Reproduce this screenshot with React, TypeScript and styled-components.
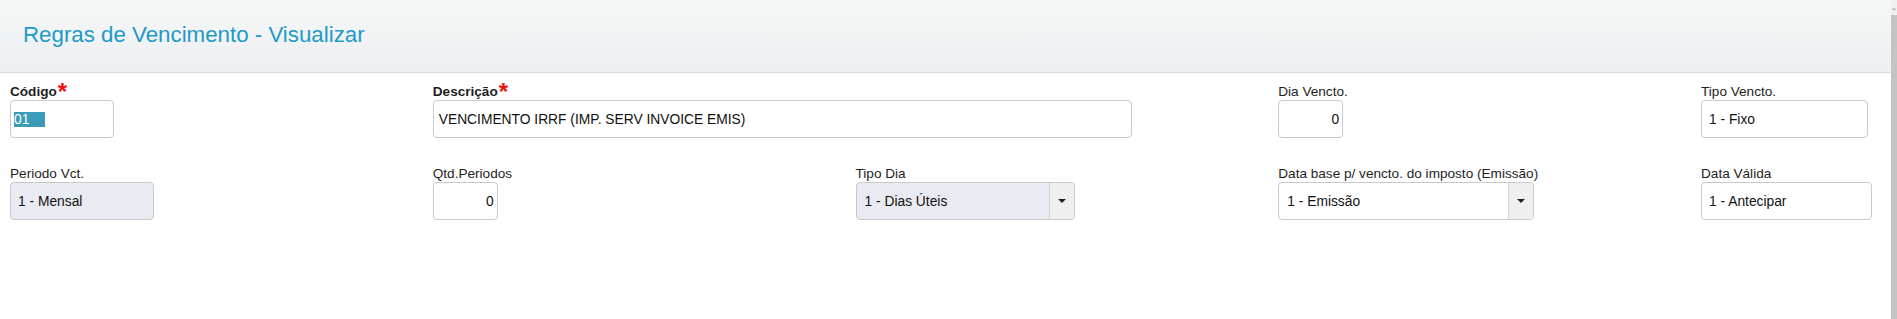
import styled, { createGlobalStyle } from 'styled-components'

const GlobalStyle = createGlobalStyle`
    html, body {
        margin: 0;
        padding: 0;
        background: #fff;
        font-family: "Liberation Sans", Arial, sans-serif;
    }
`

const Page = styled.div`
    display: flex;
    height: 319px;
    overflow: hidden;
`

const Main = styled.div`
    flex-grow: 1;
    display: flex;
    flex-direction: column;
`

const Header = styled.div`
    height: 73px;
    border-bottom: 1px solid #d9dadb;
    background: linear-gradient(#f6f7f7, #eeeff1);
    display: flex;
    align-items: center;
    padding: 0 0 3px 23px;
    box-sizing: border-box;
    flex-shrink: 0;
`

const Title = styled.h1`
    margin: 0;
    font-size: 22.3px;
    font-weight: normal;
    color: #1d9bc7;
`

const Form = styled.div`
    display: grid;
    grid-template-columns: repeat(4, 422.75px) 1fr;
    row-gap: 27px;
    padding: 10px 0 0 10px;
`

const Field = styled.div<{ span?: number }>`
    display: flex;
    flex-direction: column;
    align-items: flex-start;
    ${props => props.span ? `grid-column: span ${props.span};` : ""}
`

const Label = styled.label<{ required?: boolean }>`
    font-size: 13.6px;
    line-height: 17px;
    color: #1e1e1e;
    font-weight: ${props => props.required ? "bold" : "normal"};
    white-space: nowrap;
`

// red mark after mandatory field names
const Star = styled.span`
    color: #f01010;
    font-size: 24px;
    line-height: 0;
    font-weight: bold;
    vertical-align: -4px;
    margin-left: 1px;
`

const Box = styled.div<{ w: number; grey?: boolean; right?: boolean; pad?: number }>`
    width: ${props => props.w}px;
    height: 38px;
    box-sizing: border-box;
    border: 1px solid #c9c9c9;
    border-radius: 4px;
    background: ${props => props.grey ? "#e8ebf1" : "#fff"};
    display: flex;
    align-items: center;
    overflow: hidden;
    justify-content: ${props => props.right ? "flex-end" : "flex-start"};
    padding: ${props => props.right ? "0 3px 0 0" : `0 0 0 ${props.pad ?? 7}px`};
    font-size: 13.8px;
    color: #111;
    white-space: nowrap;
`

const Value = styled.span`
    flex-grow: 1;
`

const Selected = styled.span`
    background: #3a9cb9;
    color: #fff;
    width: 31px;
    line-height: 15px;
`

const Arrow = styled.div`
    width: 24px;
    align-self: stretch;
    border-left: 1px solid #d2d2d2;
    background: #efefef;
    display: flex;
    align-items: center;
    justify-content: center;

    &::after {
        content: "";
        border-left: 4px solid transparent;
        border-right: 4px solid transparent;
        border-top: 4px solid #222;
    }
`

const Scrollbar = styled.div`
    width: 6px;
    flex-shrink: 0;
    background: #f0f0f0;
    display: flex;
    flex-direction: column;
    align-items: center;
`

const ScrollArrow = styled.div`
    margin-top: 8px;
    border-left: 2px solid transparent;
    border-right: 2px solid transparent;
    border-bottom: 2px solid #a3a3a3;
`

const Thumb = styled.div`
    margin-top: 5px;
    width: 100%;
    flex-grow: 1;
    background: #c3c3c3;
`

function Select(props: { w: number; grey?: boolean; value: string }) {
    return (
        <Box w={props.w} grey={props.grey} pad={8}>
            <Value>{props.value}</Value>
            <Arrow />
        </Box>
    )
}

export default function App() {
    return (
        <>
            <GlobalStyle />
            <Page>
                <Main>
                    <Header>
                        <Title>Regras de Vencimento - Visualizar</Title>
                    </Header>
                    <Form>
                        <Field>
                            <Label required>Código<Star>*</Star></Label>
                            <Box w={104} pad={3}>
                                <Selected>01</Selected>
                            </Box>
                        </Field>
                        <Field span={2}>
                            <Label required>Descrição<Star>*</Star></Label>
                            <Box w={699} pad={5}>VENCIMENTO IRRF (IMP. SERV INVOICE EMIS)</Box>
                        </Field>
                        <Field>
                            <Label>Dia Vencto.</Label>
                            <Box w={65} right>0</Box>
                        </Field>
                        <Field>
                            <Label>Tipo Vencto.</Label>
                            <Box w={167}>1 - Fixo</Box>
                        </Field>

                        <Field>
                            <Label>Periodo Vct.</Label>
                            <Box w={144} grey>1 - Mensal</Box>
                        </Field>
                        <Field>
                            <Label>Qtd.Periodos</Label>
                            <Box w={65} right>0</Box>
                        </Field>
                        <Field>
                            <Label>Tipo Dia</Label>
                            <Select w={219} grey value="1 - Dias Úteis" />
                        </Field>
                        <Field>
                            <Label>Data base p/ vencto. do imposto (Emissão)</Label>
                            <Select w={256} value="1 - Emissão" />
                        </Field>
                        <Field>
                            <Label>Data Válida</Label>
                            <Box w={171}>1 - Antecipar</Box>
                        </Field>
                    </Form>
                </Main>
                <Scrollbar>
                    <ScrollArrow />
                    <Thumb />
                </Scrollbar>
            </Page>
        </>
    )
}
